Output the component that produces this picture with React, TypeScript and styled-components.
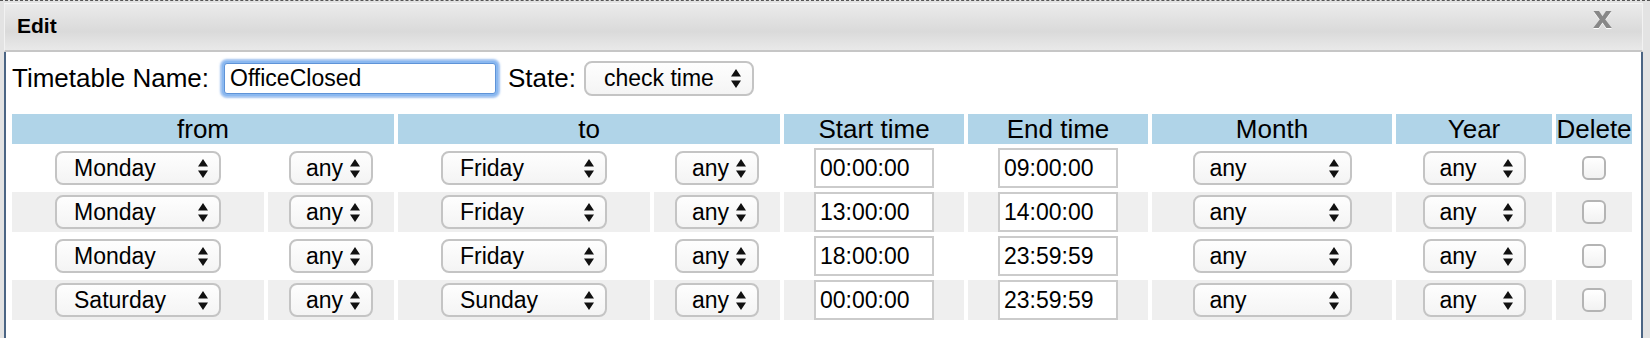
import React from "react";
import styled, { createGlobalStyle } from "styled-components";

const GlobalStyle = createGlobalStyle`
  html, body {
    margin: 0;
    padding: 0;
  }
  body {
    background: #e3e3e3;
    font-family: "Liberation Sans", Arial, Helvetica, sans-serif;
    color: #000;
  }
`;

const Page = styled.div`
  box-sizing: border-box;
  width: 1650px;
  height: 338px;
  overflow: hidden;
  padding: 2px 7px 0 4px;
  border-top: 1px dashed #555;
  background: #e3e3e3;
`;

const Dialog = styled.div`
  width: 1639px;
  height: 335px;
  display: flex;
  flex-direction: column;
`;

const TitleBar = styled.div`
  box-sizing: border-box;
  height: 49px;
  display: flex;
  justify-content: space-between;
  align-items: flex-start;
  border-top: 1px solid #f6f6f6;
  border-left: 1px solid #f2f2f2;
  border-right: 1px solid #f2f2f2;
  border-bottom: 2px solid #c6c6c6;
  background: linear-gradient(#ebebeb 0%, #dedede 45%, #dadada 60%, #e9e9e9 100%);
`;

const Title = styled.span`
  margin: 11px 0 0 12px;
  font-size: 21px;
  line-height: 21px;
  font-weight: bold;
`;

const Close = styled.button`
  margin: 7px 30px 0 0;
  padding: 0;
  border: 0;
  background: none;
  line-height: 0;
  cursor: pointer;
  filter: drop-shadow(0 1px 0 #fff);
`;

const CloseIcon = () => (
  <svg width="19" height="17" viewBox="0 0 19 17">
    <path
      d="M0.5 0 H6 L9.5 5.2 L13 0 H18.5 L12.3 8.4 L18.8 17 H13.3 L9.5 11.6 L5.7 17 H0.2 L6.7 8.4 Z"
      fill="#888"
    />
  </svg>
);

const Body = styled.div`
  flex: 1;
  background: #fff;
  border-left: 2px solid #4b6584;
  border-right: 2px solid #4b6584;
  padding: 7px 0 0 2px;
`;

const FormRow = styled.div`
  height: 38px;
  display: flex;
  align-items: center;
  padding-left: 4px;
`;

const Label = styled.label<{ $gap?: number }>`
  font-size: 26px;
  line-height: 30px;
  margin-left: ${(p) => p.$gap ?? 0}px;
`;

const NameInput = styled.input`
  box-sizing: border-box;
  width: 272px;
  height: 31px;
  margin-left: 15px;
  padding: 0 5px;
  font-family: inherit;
  font-size: 23px;
  border: 1px solid #5e93d8;
  border-radius: 3px;
  outline: none;
  box-shadow: 0 0 0 2px #8ab8f0, 0 0 2px 4px rgba(120, 170, 235, 0.7);
`;

const SelectBox = styled.div<{ $w: number; $h?: number; $pl?: number; $gap?: number }>`
  box-sizing: border-box;
  width: ${(p) => p.$w}px;
  height: ${(p) => p.$h ?? 34}px;
  margin-left: ${(p) => p.$gap ?? 0}px;
  display: inline-flex;
  align-items: center;
  justify-content: space-between;
  padding: 0 11px 0 ${(p) => p.$pl ?? 15}px;
  border: 2px solid #c4c4c4;
  border-radius: 8px;
  background: linear-gradient(#fefefe, #f4f4f4);
  font-size: 23px;
  line-height: 26px;
  vertical-align: middle;
  cursor: default;

  svg {
    flex-shrink: 0;
  }
`;

const Arrows = () => (
  <svg width="10" height="19" viewBox="0 0 10 19">
    <path d="M5 0 L10 7.5 H0 Z M0 11.5 H10 L5 19 Z" fill="#111" />
  </svg>
);

const Select: React.FC<{ value: string; w: number; h?: number; pl?: number; gap?: number }> = ({
  value,
  w,
  h,
  pl,
  gap,
}) => (
  <SelectBox $w={w} $h={h} $pl={pl} $gap={gap}>
    <span>{value}</span>
    <Arrows />
  </SelectBox>
);

const Table = styled.table`
  margin-top: 13px;
  border-collapse: separate;
  border-spacing: 4px;
  table-layout: fixed;
  width: 1628px;
`;

const HeadCell = styled.th`
  height: 30px;
  padding: 0;
  background: #b0d4e8;
  font-size: 26px;
  line-height: 30px;
  font-weight: normal;
  text-align: center;
`;

const Cell = styled.td<{ $alt: boolean }>`
  height: 40px;
  padding: 0;
  text-align: center;
  vertical-align: middle;
  background: ${(p) => (p.$alt ? "#efefef" : "#fff")};
`;

const TimeInput = styled.input`
  box-sizing: border-box;
  width: 120px;
  height: 40px;
  padding: 0 4px;
  border: 2px solid #cbcbcb;
  background: #fff;
  font-family: inherit;
  font-size: 23px;
  vertical-align: middle;
  outline: none;
`;

const Check = styled.input`
  appearance: none;
  box-sizing: border-box;
  width: 24px;
  height: 24px;
  margin: 0;
  border: 2px solid #b4b4b4;
  border-radius: 6px;
  background: linear-gradient(#ffffff, #f2f2f2);
  vertical-align: middle;
`;

const cols = [252, 126, 252, 126, 180, 180, 240, 156, 76];

const rows = [
  { from: "Monday", to: "Friday", start: "00:00:00", end: "09:00:00" },
  { from: "Monday", to: "Friday", start: "13:00:00", end: "14:00:00" },
  { from: "Monday", to: "Friday", start: "18:00:00", end: "23:59:59" },
  { from: "Saturday", to: "Sunday", start: "00:00:00", end: "23:59:59" },
];

const App: React.FC = () => (
  <>
    <GlobalStyle />
    <Page>
      <Dialog>
        <TitleBar>
          <Title>Edit</Title>
          <Close aria-label="close">
            <CloseIcon />
          </Close>
        </TitleBar>
        <Body>
          <FormRow>
            <Label>Timetable Name:</Label>
            <NameInput defaultValue="OfficeClosed" />
            <Label $gap={12}>State:</Label>
            <Select value="check time" w={170} h={35} pl={18} gap={8} />
          </FormRow>
          <Table>
            <colgroup>
              {cols.map((w, i) => (
                <col key={i} style={{ width: w }} />
              ))}
            </colgroup>
            <thead>
              <tr>
                <HeadCell colSpan={2}>from</HeadCell>
                <HeadCell colSpan={2}>to</HeadCell>
                <HeadCell>Start time</HeadCell>
                <HeadCell>End time</HeadCell>
                <HeadCell>Month</HeadCell>
                <HeadCell>Year</HeadCell>
                <HeadCell>Delete</HeadCell>
              </tr>
            </thead>
            <tbody>
              {rows.map((r, i) => {
                const alt = i % 2 === 1;
                return (
                  <tr key={i}>
                    <Cell $alt={alt}>
                      <Select value={r.from} w={166} pl={17} />
                    </Cell>
                    <Cell $alt={alt}>
                      <Select value="any" w={84} />
                    </Cell>
                    <Cell $alt={alt}>
                      <Select value={r.to} w={166} pl={17} />
                    </Cell>
                    <Cell $alt={alt}>
                      <Select value="any" w={84} />
                    </Cell>
                    <Cell $alt={alt}>
                      <TimeInput defaultValue={r.start} />
                    </Cell>
                    <Cell $alt={alt}>
                      <TimeInput defaultValue={r.end} />
                    </Cell>
                    <Cell $alt={alt}>
                      <Select value="any" w={159} />
                    </Cell>
                    <Cell $alt={alt}>
                      <Select value="any" w={103} />
                    </Cell>
                    <Cell $alt={alt}>
                      <Check type="checkbox" />
                    </Cell>
                  </tr>
                );
              })}
            </tbody>
          </Table>
        </Body>
      </Dialog>
    </Page>
  </>
);

export default App;
